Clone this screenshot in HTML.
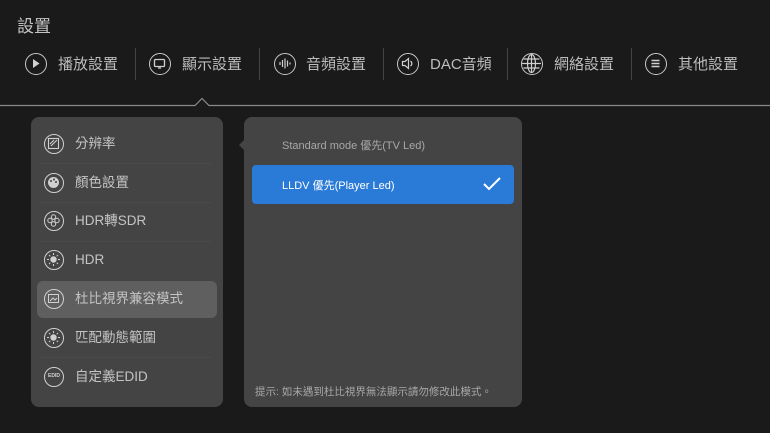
<!DOCTYPE html>
<html><head><meta charset="utf-8"><style>
*{margin:0;padding:0;box-sizing:border-box}
body{width:770px;height:433px;background:#1a1a1a;font-family:"Liberation Sans","Noto Sans CJK TC",sans-serif;color:#bdbdbd;position:relative;overflow:hidden}
.abs{position:absolute}
.title{left:17px;top:12px;font-size:17px;color:#c4c4c4}
.nav{font-size:15px;top:55px;line-height:20px;color:#bdbdbd}
.ic{position:absolute;width:22px;height:22px;border:1.6px solid #c8c8c8;border-radius:50%}
.div{position:absolute;top:48px;width:1px;height:32px;background:#444}
.panel{background:#444;border-radius:8px}
.item{position:absolute;left:75px;font-size:13.5px;color:#c4c4c4;line-height:16px}
.sic{position:absolute;left:44px;width:20px;height:20px;border:1.5px solid #d0d0d0;border-radius:50%}
.sep{position:absolute;left:40px;width:172px;height:1px;background:#4a4a4a}
</style></head><body>
<div class="abs title">設置</div>

<div class="ic" style="left:25px;top:53px"><svg width="19" height="19" viewBox="0 0 19 19" style="position:absolute;left:0;top:0"><path d="M7 5 L13.5 9.5 L7 14Z" fill="#d0d0d0"/></svg></div>
<div class="abs nav" style="left:58px">播放設置</div>
<div class="div" style="left:135px"></div>
<div class="ic" style="left:149px;top:53px"><svg width="19" height="19" viewBox="0 0 19 19" style="position:absolute;left:0;top:0"><rect x="4.5" y="5.5" width="10" height="7" rx="1" fill="none" stroke="#d0d0d0" stroke-width="1.3"/><path d="M8 14h3" stroke="#d0d0d0" stroke-width="1.3"/></svg></div>
<div class="abs nav" style="left:182px">顯示設置</div>
<div class="div" style="left:259px"></div>
<div class="ic" style="left:274px;top:53px"><svg width="19" height="19" viewBox="0 0 19 19" style="position:absolute;left:0;top:0"><path d="M5 8v3M7.5 6v7M10 4.5v10M12.5 6.5v6M15 8.5v2" stroke="#d0d0d0" stroke-width="1.2"/></svg></div>
<div class="abs nav" style="left:306px">音頻設置</div>
<div class="div" style="left:383px"></div>
<div class="ic" style="left:397px;top:53px"><svg width="19" height="19" viewBox="0 0 19 19" style="position:absolute;left:0;top:0"><path d="M4.5 7.5h2.5l3.5-3v10l-3.5-3h-2.5z" fill="none" stroke="#d0d0d0" stroke-width="1.2"/><path d="M12.5 7a3 3 0 0 1 0 5" fill="none" stroke="#d0d0d0" stroke-width="1.2"/></svg></div>
<div class="abs nav" style="left:430px">DAC音頻</div>
<div class="div" style="left:507px"></div>
<div class="ic" style="left:521px;top:53px"><svg width="19" height="19" viewBox="0 0 19 19" style="position:absolute;left:0;top:0"><ellipse cx="9.5" cy="9.5" rx="4" ry="9" fill="none" stroke="#d0d0d0" stroke-width="1.2"/><path d="M9.5 0v19M0 9.5h19M1.5 5h16M1.5 14h16" stroke="#d0d0d0" stroke-width="1.2"/></svg></div>
<div class="abs nav" style="left:554px">網絡設置</div>
<div class="div" style="left:631px"></div>
<div class="ic" style="left:645px;top:53px"><svg width="19" height="19" viewBox="0 0 19 19" style="position:absolute;left:0;top:0"><path d="M5.5 6.5h8M5.5 9.5h8M5.5 12.5h8" stroke="#d0d0d0" stroke-width="1.4"/></svg></div>
<div class="abs nav" style="left:678px">其他設置</div>

<svg class="abs" style="left:0;top:96px" width="770" height="12"><path d="M0 9.5H195L202 2.5L209 9.5H770" fill="none" stroke="#8a8a8a" stroke-width="1.2"/></svg>

<div class="abs panel" style="left:31px;top:117px;width:192px;height:290px"></div>
<div class="abs" style="left:37px;top:281px;width:180px;height:37px;background:#5f5f5f;border-radius:6px"></div>
<div class="sep" style="top:163px"></div><div class="sep" style="top:202px"></div><div class="sep" style="top:241px"></div><div class="sep" style="top:357px"></div>

<div class="sic" style="top:134px"><svg width="17" height="17" style="position:absolute;left:0;top:0"><rect x="3.5" y="3.5" width="10" height="10" fill="none" stroke="#d0d0d0" stroke-width="1.1"/><path d="M5 9l4-4M6 11l6-6" stroke="#d0d0d0"/></svg></div>
<div class="item" style="top:136px">分辨率</div>
<div class="sic" style="top:173px"><svg width="17" height="17" style="position:absolute;left:0;top:0"><circle cx="8.5" cy="8.5" r="5.5" fill="#d0d0d0"/><circle cx="6" cy="7" r="1" fill="#444"/><circle cx="9" cy="5.5" r="1" fill="#444"/><circle cx="11" cy="8" r="1" fill="#444"/></svg></div>
<div class="item" style="top:175px">顏色設置</div>
<div class="sic" style="top:211px"><svg width="17" height="17" style="position:absolute;left:0;top:0"><g fill="none" stroke="#d0d0d0"><circle cx="8.5" cy="5" r="2.2"/><circle cx="8.5" cy="12" r="2.2"/><circle cx="5" cy="8.5" r="2.2"/><circle cx="12" cy="8.5" r="2.2"/></g></svg></div>
<div class="item" style="top:213px">HDR轉SDR</div>
<div class="sic" style="top:250px"><svg width="17" height="17" style="position:absolute;left:0;top:0"><circle cx="8.5" cy="8.5" r="3.2" fill="#d0d0d0"/><path d="M8.5 2v2M8.5 13v2M2 8.5h2M13 8.5h2M4 4l1.3 1.3M11.7 11.7L13 13M4 13l1.3-1.3M11.7 5.3L13 4" stroke="#d0d0d0"/></svg></div>
<div class="item" style="top:252px">HDR</div>
<div class="sic" style="top:289px"><svg width="17" height="17" style="position:absolute;left:0;top:0"><rect x="3.5" y="4.5" width="10" height="8" fill="none" stroke="#d0d0d0"/><path d="M5 11l3-3 2 2 2-2" fill="none" stroke="#d0d0d0"/></svg></div>
<div class="item" style="top:291px">杜比視界兼容模式</div>
<div class="sic" style="top:328px"><svg width="17" height="17" style="position:absolute;left:0;top:0"><circle cx="8.5" cy="8.5" r="3.2" fill="#d0d0d0"/><path d="M8.5 2v2M8.5 13v2M2 8.5h2M13 8.5h2M4 4l1.3 1.3M11.7 11.7L13 13M4 13l1.3-1.3M11.7 5.3L13 4" stroke="#d0d0d0"/></svg></div>
<div class="item" style="top:330px">匹配動態範圍</div>
<div class="sic" style="top:367px;font-size:5px;font-weight:bold;text-align:center;line-height:17px;color:#d0d0d0">EDID</div>
<div class="item" style="top:369px">自定義EDID</div>

<div class="abs panel" style="left:244px;top:117px;width:278px;height:290px"></div>
<svg class="abs" style="left:238px;top:138px" width="8" height="14"><path d="M8 0L1 7L8 14Z" fill="#444"/></svg>
<div class="abs" style="left:282px;top:137px;font-size:11px;color:#a8a8a8">Standard mode 優先(TV Led)</div>
<div class="abs" style="left:252px;top:165px;width:262px;height:39px;background:#2a7bd8;border-radius:4px"></div>
<div class="abs" style="left:282px;top:177px;font-size:11px;color:#fff">LLDV 優先(Player Led)</div>
<svg class="abs" style="left:482px;top:176px" width="20" height="16"><path d="M2 8l5 5L18 2" fill="none" stroke="#fff" stroke-width="2"/></svg>
<div class="abs" style="left:255px;top:384px;font-size:10.5px;color:#a8a8a8">提示: 如未遇到杜比視界無法顯示請勿修改此模式。</div>
</body></html>
